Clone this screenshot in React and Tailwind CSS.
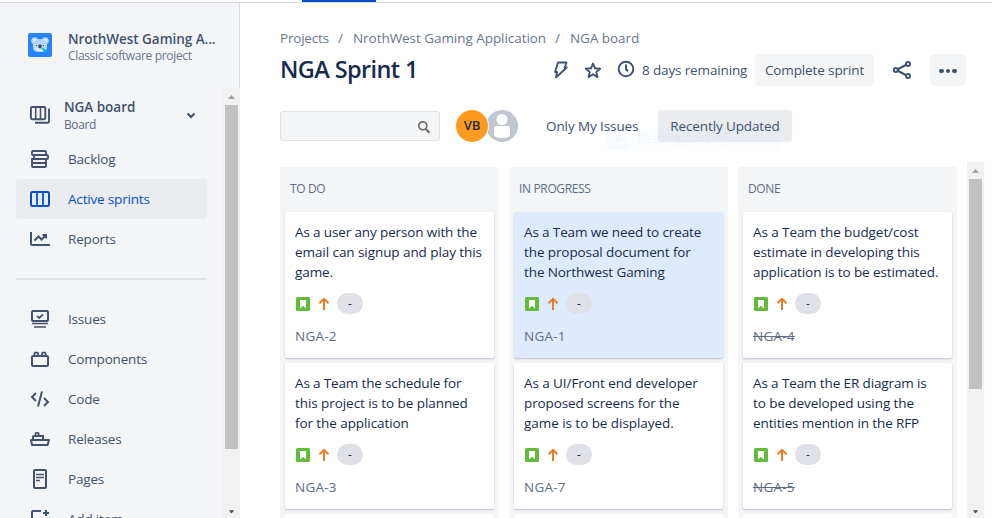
import React from 'react';
import { clsx } from 'clsx';

function Icon({ children, className = 'size-6' }) {
  return (
    <svg viewBox="0 0 24 24" fill="none" stroke="currentColor" strokeWidth="2" className={clsx('shrink-0', className)}>
      {children}
    </svg>
  );
}

const BoardIcon = () => (
  <Icon>
    <rect x="2.9" y="4" width="14.4" height="12.2" rx="1.2" strokeWidth="1.9" />
    <path d="M7.700 4v12M12.500 4v12" strokeWidth="1.6" />
    <path d="M21 5.600V18q0 1.800-1.800 1.800H7" strokeWidth="1.9" />
  </Icon>
);
const BacklogIcon = () => (
  <Icon>
    <rect x="4" y="4" width="14" height="4" rx="1" strokeWidth="1.9" />
    <rect x="6" y="8" width="14" height="4" rx="1" strokeWidth="1.9" />
    <path d="M4 12h14v7q0 1-1 1H5q-1 0-1-1zM4 16h14" strokeWidth="1.9" />
  </Icon>
);
const SprintIcon = () => (
  <Icon>
    <rect x="3" y="5" width="18" height="14" rx="1.5" />
    <path d="M9 5v14M15 5v14" strokeWidth="1.8" />
  </Icon>
);
const ReportsIcon = () => (
  <Icon>
    <path d="M3 5v12q0 1 1 1h18" />
    <path d="M6.500 13.500l4-4 3 3 4.500-4.500" />
    <path d="M14.500 8H18v3.500" />
  </Icon>
);
const IssuesIcon = () => (
  <Icon>
    <rect x="4" y="4" width="16" height="10" rx="1" />
    <path d="M9 8.800l2.200 2.200L15 7.500" strokeWidth="1.8" />
    <path d="M4 16.500h16M6 20h12" strokeWidth="1.7" />
  </Icon>
);
const ComponentsIcon = () => (
  <Icon>
    <rect x="4" y="9" width="16" height="10" rx="1" />
    <path d="M6.500 9V6.500q0-.8.8-.8h2q.8 0 .8.8V9M14 9V6.500q0-.8.8-.8h2q.8 0 .8.8V9" strokeWidth="1.8" />
  </Icon>
);
const CodeIcon = () => (
  <Icon>
    <path d="M8 6L4 10l4 4M16 11l4 4-4 4M14 4.500L10 19.500" />
  </Icon>
);
const ShipIcon = () => (
  <Icon>
    <path d="M3 13h18l-1.400 5H4z" strokeLinejoin="round" />
    <path d="M5 13v-3q0-1 1-1h9v4" />
    <path d="M7.500 9V6.800q0-.9.9-.9h1.400q.9 0 .9.9V9" strokeWidth="1.8" />
  </Icon>
);
const PageIcon = () => (
  <Icon>
    <rect x="6" y="3" width="12" height="18" rx="1" />
    <path d="M8 7.500h8M8 10.500h8M8 13.500h4" strokeWidth="1.5" />
  </Icon>
);
const AddIcon = () => (
  <Icon>
    <path d="M13 4H5q-1 0-1 1v14q0 1 1 1h14q1 0 1-1v-8M18 3v6M15 6h6" />
  </Icon>
);

function Koala() {
  return (
    <svg viewBox="0 0 24 24" className="size-6 shrink-0">
      <rect width="24" height="24" rx="2" fill="#2684ff" />
      <circle cx="6.8" cy="7.8" r="3.6" fill="#b3d4ff" />
      <circle cx="17.2" cy="7.8" r="3.6" fill="#b3d4ff" />
      <circle cx="6.8" cy="7.8" r="2.1" fill="#deebff" />
      <circle cx="17.2" cy="7.8" r="2.1" fill="#deebff" />
      <path d="M5 12q0-6 7-6t7 6v3q0 4-7 4t-7-4z" fill="#b3d4ff" />
      <path d="M6 16q6 5 12 0l-2-1.500H8z" fill="#deebff" />
      <circle cx="8.500" cy="12.400" r="1.3" fill="#fff" />
      <circle cx="15.500" cy="12.400" r="1.3" fill="#fff" />
      <circle cx="8.600" cy="12.500" r=".8" fill="#253858" />
      <circle cx="15.400" cy="12.500" r=".8" fill="#253858" />
      <rect x="10.400" y="11.500" width="3.200" height="4" rx="1.4" fill="#344563" />
      <path d="M14 15l4.500 4" stroke="#00b8d9" strokeWidth="1.7" />
    </svg>
  );
}

function NavItem({ icon, label, active }) {
  return (
    <div
      className={clsx(
        'flex h-10 w-[191px] shrink-0 items-center gap-4 rounded-[3px] pl-3 text-[13.5px] tracking-[-0.18px]',
        active ? 'bg-[#ebecf0] text-[#0052cc]' : 'text-[#42526e]'
      )}
    >
      {icon}
      <span>{label}</span>
    </div>
  );
}

function Scrollbar({ thumb, className }) {
  return (
    <div className={clsx('flex h-full w-[17px] shrink-0 flex-col items-center bg-[#f1f1f1]', className)}>
      <svg viewBox="0 0 17 17" className="size-[17px] shrink-0"><path d="M5 11h7L8.500 7z" fill="#a3a3a3" /></svg>
      <div className={clsx('w-[13px] shrink-0 bg-[#c1c1c1]', thumb)} />
      <svg viewBox="0 0 17 17" className="mt-auto h-[13px] w-[17px] shrink-0 overflow-visible"><path d="M5 7h7l-3.500 4z" fill="#505050" /></svg>
    </div>
  );
}

function Sidebar() {
  return (
    <aside className="flex w-60 shrink-0 flex-col border-r border-[#d9dbe0] bg-[#f4f5f7]">
      <div className="flex h-[85px] shrink-0 gap-4 pt-[30px] pl-7">
        <Koala />
        <div className="-mt-0.5 whitespace-nowrap">
          <div className="text-[13.5px] leading-4 font-semibold tracking-[-0.04px] text-[#42526e]">NrothWest Gaming A...</div>
          <div className="mt-px text-xs leading-4 tracking-[-0.34px] text-[#6b778c]">Classic software project</div>
        </div>
      </div>
      <div className="flex min-h-0 flex-1 justify-between">
        <nav className="flex flex-col overflow-hidden pl-4">
          <div className="flex h-[51px] shrink-0 items-center gap-3 pt-0.5 pl-3 text-[#42526e]">
            <BoardIcon />
            <div className="w-[109px] whitespace-nowrap">
              <div className="text-[13.5px] leading-5 font-semibold tracking-[-0.02px]">NGA board</div>
              <div className="text-xs leading-4 tracking-[-0.4px] text-[#5e6c84]">Board</div>
            </div>
            <svg viewBox="0 0 12 12" className="size-3" fill="none" stroke="currentColor" strokeWidth="2"><path d="M2.500 4.500L6 8l3.500-3.500" /></svg>
          </div>
          <NavItem icon={<BacklogIcon />} label="Backlog" />
          <NavItem icon={<SprintIcon />} label="Active sprints" active />
          <NavItem icon={<ReportsIcon />} label="Reports" />
          <div className="mt-[19px] mb-[19px] h-0.5 w-[191px] shrink-0 bg-[#dfe1e6]" />
          <NavItem icon={<IssuesIcon />} label="Issues" />
          <NavItem icon={<ComponentsIcon />} label="Components" />
          <NavItem icon={<CodeIcon />} label="Code" />
          <NavItem icon={<ShipIcon />} label="Releases" />
          <NavItem icon={<PageIcon />} label="Pages" />
          <NavItem icon={<AddIcon />} label="Add item" />
        </nav>
        <Scrollbar thumb="h-[344px]" className="-mr-px" />
      </div>
    </aside>
  );
}

function Card({ lines, id, selected, done }) {
  return (
    <div
      className={clsx(
        'flex h-[146px] shrink-0 flex-col rounded-[2px] px-2.5 pt-2.5 shadow-[0_1px_2px_rgba(9,30,66,0.25)]',
        selected ? 'bg-[#deebff]' : 'bg-white'
      )}
    >
      <div className="h-[60px] text-[13.5px] leading-5 whitespace-nowrap text-[#172b4d]">
        {lines.map(([text, tracking]) => (
          <div key={text} className={tracking}>{text}</div>
        ))}
      </div>
      <div className="mt-[11px] flex h-[21px] items-center">
        <svg viewBox="0 0 14 14" className="ml-px size-[14px]">
          <rect width="14" height="14" rx="1.5" fill="#63ba3c" />
          <path d="M4 3h6v8.500L7 8.700l-3 2.800z" fill="#fff" />
        </svg>
        <svg viewBox="0 0 12 14" className="ml-2 h-[14px] w-3" fill="none" stroke="#ea7d24" strokeWidth="2">
          <path d="M6 13V2M1.500 6.300L6 1.800l4.500 4.500" />
        </svg>
        <div className="ml-[7px] flex h-[21px] w-[26px] items-center justify-center rounded-full bg-[#dfe1e6] pt-px text-xs leading-none text-[#172b4d]">-</div>
      </div>
      <div className="mt-3 text-[13.5px] leading-5 text-[#5e6c84]">
        <span className={clsx('tracking-[0.25px]', done && 'line-through')}>{id}</span>
      </div>
    </div>
  );
}

const columns = [
  {
    name: 'TO DO',
    cards: [
      {
        id: 'NGA-2',
        lines: [
          ['As a user any person with the', 'tracking-[-0.13px]'],
          ['email can signup and play this', 'tracking-[-0.07px]'],
          ['game.', 'tracking-[-0.1px]'],
        ],
      },
      {
        id: 'NGA-3',
        lines: [
          ['As a Team the schedule for', 'tracking-[-0.15px]'],
          ['this project is to be planned', 'tracking-[-0.07px]'],
          ['for the application', 'tracking-[-0.08px]'],
        ],
      },
    ],
  },
  {
    name: 'IN PROGRESS',
    cards: [
      {
        id: 'NGA-1',
        selected: true,
        lines: [
          ['As a Team we need to create', 'tracking-[-0.13px]'],
          ['the proposal document for', 'tracking-[-0.1px]'],
          ['the Northwest Gaming', 'tracking-[-0.1px]'],
        ],
      },
      {
        id: 'NGA-7',
        lines: [
          ['As a UI/Front end developer', 'tracking-[-0.08px]'],
          ['proposed screens for the', 'tracking-[-0.12px]'],
          ['game is to be displayed.', 'tracking-[-0.05px]'],
        ],
      },
    ],
  },
  {
    name: 'DONE',
    cards: [
      {
        id: 'NGA-4',
        done: true,
        lines: [
          ['As a Team the budget/cost', 'tracking-[-0.08px]'],
          ['estimate in developing this', 'tracking-[-0.08px]'],
          ['application is to be estimated.', 'tracking-[-0.1px]'],
        ],
      },
      {
        id: 'NGA-5',
        done: true,
        lines: [
          ['As a Team the ER diagram is', 'tracking-[-0.12px]'],
          ['to be developed using the', 'tracking-[-0.08px]'],
          ['entities mention in the RFP', 'tracking-[-0.11px]'],
        ],
      },
    ],
  },
];

function Header() {
  return (
    <header className="mr-[26px] text-[#42526e]">
      <div className="flex h-5 items-center text-[13.5px] whitespace-nowrap text-[#6b778c]">
        <span className="w-[58px] tracking-[-0.2px]">Projects</span>
        <span className="w-[15px]">/</span>
        <span className="w-[202px] tracking-[-0.05px]">NrothWest Gaming Application</span>
        <span className="w-[15px]">/</span>
        <span className="tracking-[-0.05px]">NGA board</span>
      </div>
      <div className="mt-1.5 flex h-8 items-center whitespace-nowrap">
        <h1 className="w-[268px] text-[23.5px] font-[550] tracking-[-0.6px] text-[#172b4d]">NGA Sprint 1</h1>
        <Icon>
          <path d="M10 4.500h8.500l-1.800 5h2L8 19.500l1-5.500H7z" strokeWidth="1.9" strokeLinejoin="round" />
        </Icon>
        <Icon className="ml-2 size-6">
          <path d="M13 5.500l2 4.800 5.200.4-4 3.400 1.300 5-4.500-2.800-4.500 2.800 1.300-5-4-3.400 5.200-.4z" strokeWidth="1.9" strokeLinejoin="round" />
        </Icon>
        <Icon className="ml-2.5 size-6">
          <circle cx="12" cy="11" r="7.300" />
          <path d="M12 6.500v4.800l2 2" />
        </Icon>
        <span className="ml-1 w-[113px] text-[13.5px] tracking-[-0.14px]">8 days remaining</span>
        <button className="h-8 w-[119px] rounded-[3px] bg-[#f4f5f7] text-[13.5px] tracking-[-0.12px]">Complete sprint</button>
        <Icon className="ml-4 size-6">
          <path d="M6.500 12l11-6M6.500 12l11 6" />
          <circle cx="5.800" cy="12" r="2" fill="#fff" />
          <circle cx="18" cy="6" r="2" fill="#fff" />
          <circle cx="18" cy="18" r="2" fill="#fff" />
        </Icon>
        <button className="ml-auto flex h-8 w-9 items-center justify-center gap-0.5 rounded-[3px] bg-[#f4f5f7] pt-0.5">
          <i className="size-[4.5px] rounded-full bg-[#42526e]" />
          <i className="size-[4.5px] rounded-full bg-[#42526e]" />
          <i className="size-[4.5px] rounded-full bg-[#42526e]" />
        </button>
      </div>
      <div className="mt-6 flex h-8 items-center">
        <div className="flex h-[30px] w-40 items-center justify-end rounded-[3px] border border-[#dfe1e6] bg-[#f4f5f7] pr-2">
          <svg viewBox="0 0 14 14" className="mt-px size-[14px]" fill="none" stroke="#707070" strokeWidth="1.7">
            <circle cx="5.800" cy="5.800" r="4" />
            <path d="M8.800 9l3.700 3.700" strokeWidth="2.200" />
          </svg>
        </div>
        <div className="z-10 ml-4 flex size-8 items-center justify-center rounded-full bg-[#ff991f] text-[13px] font-semibold text-[#172b4d] ring-1 ring-white">VB</div>
        <svg viewBox="0 0 32 32" className="-ml-0.5 size-8">
          <circle cx="16" cy="16" r="16" fill="#c1c7d0" />
          <circle cx="16" cy="9.500" r="5.500" fill="#fff" />
          <path d="M8 18.500q0-2.500 2.500-2.500h11Q24 16 24 18.500v6.500Q24 28 16 28t-8-3z" fill="#fff" />
        </svg>
        <span className="ml-7 w-28 text-[13.5px] tracking-[-0.1px]">Only My Issues</span>
        <div className="relative">
          <button className="h-8 w-[134px] rounded-[3px] bg-[#ebecf0] text-[13.5px] tracking-[-0.12px] whitespace-nowrap">Recently Updated</button>
          <div className="pointer-events-none absolute top-[18px] -left-[51px] flex h-[22px] w-[173px] items-center bg-[#2684ff]/[0.02]">
            <div className="flex h-full w-[21px] items-center justify-center bg-[#2684ff]/[0.015]"><i className="size-1.5 rounded-full bg-black/[0.02]" /></div>
            <span className="ml-2.5 text-xs tracking-[-0.3px] text-black/[0.04]">Rectangular Snip</span>
          </div>
        </div>
      </div>
    </header>
  );
}

export default function App() {
  return (
    <div className="flex h-[518px] w-[992px] flex-col overflow-hidden bg-white font-['Open_Sans','Noto_Sans',sans-serif]">
      <div className="h-[3px] shrink-0 border-b border-[#d5d8e2] pl-[302px]">
        <div className="h-0.5 w-[74px] bg-[#0052cc]" />
      </div>
      <div className="flex min-h-0 flex-1">
        <Sidebar />
        <main className="flex min-w-0 flex-1 flex-col pt-[25px] pl-10">
          <Header />
          <div className="mt-5 flex min-h-0 flex-1">
            <div className="flex flex-1 gap-2.5 pt-[5px]">
              {columns.map((col) => (
                <section key={col.name} className="flex w-[219px] shrink-0 flex-col rounded-t-[3px] bg-[#f4f5f7]">
                  <h2 className="h-[43px] shrink-0 pl-2.5 text-xs leading-[43px] tracking-[-0.35px] text-[#5e6c84]">{col.name}</h2>
                  <div className="flex min-h-0 flex-1 flex-col gap-[5px] overflow-hidden px-[5px] pt-0.5">
                    {col.cards.map((card) => <Card key={card.id} {...card} />)}
                    <div className="h-10 shrink-0 rounded-[2px] bg-white" />
                  </div>
                </section>
              ))}
            </div>
            <Scrollbar thumb="h-[210px]" />
            <div className="w-2 shrink-0 bg-[#fdfdfd]" />
          </div>
        </main>
      </div>
    </div>
  );
}
